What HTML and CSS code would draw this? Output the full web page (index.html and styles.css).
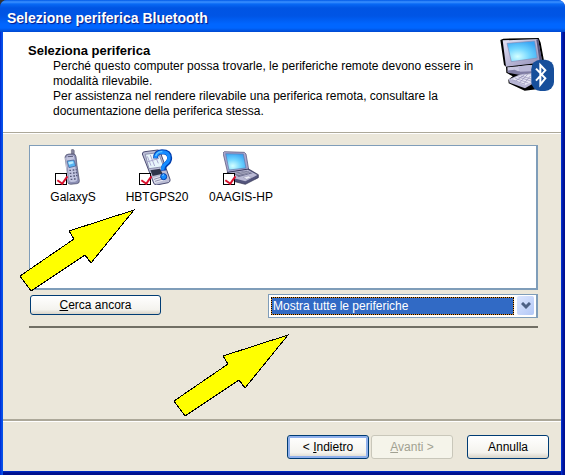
FILE: index.html
```html
<!DOCTYPE html>
<html lang="it">

<head>
    <meta charset="UTF-8">
    <meta name="viewport" content="width=device-width, initial-scale=1.0">
    <title>Selezione periferica Bluetooth</title>
    <link rel="stylesheet" href="styles.css">
</head>

<body>
    <div class="window">
        <div class="title-bar">Selezione periferica Bluetooth</div>

        <div class="window-body">
            <!-- intestazione -->
            <header class="wizard-header">
                <div class="header-text">
                    <h1>Seleziona periferica</h1>
                    <p>Perché questo computer possa trovarle, le periferiche remote devono essere in<br>modalità rilevabile.</p>
                    <p>Per assistenza nel rendere rilevabile una periferica remota, consultare la<br>documentazione della periferica stessa.</p>
                </div>
                <svg class="header-icon" viewBox="28 24 162 162" aria-hidden="true">
                    <defs>
                        <radialGradient id="screen" cx="35%" cy="75%" r="80%">
                            <stop offset="0" stop-color="#d4ffff" />
                            <stop offset=".5" stop-color="#70d5ff" />
                            <stop offset="1" stop-color="#38a4f4" />
                        </radialGradient>
                        <linearGradient id="frame" x1="0" y1="0" x2="1" y2="1">
                            <stop offset="0" stop-color="#e5e4f6" />
                            <stop offset="1" stop-color="#8f8cb6" />
                        </linearGradient>
                    </defs>
                    <path d="M29 30 38 26 144 24 150 38 160 92 150 176 102 182 54 160 53 149 66 139 47 128 46 110 40 105Z" fill="#000" />
                    <path d="M36 31 142 27 154 92 148 98 46 110Z" fill="url(#frame)" />
                    <path d="M137 29 142 27 154 92 147 95Z" fill="#56547b" />
                    <path d="M49 40 132 33 140 84 62 95Z" fill="url(#screen)" stroke="#8a89b4" stroke-width="2" />
                    <path d="M50 112 124 105 130 117 84 129 70 125 51 127Z" fill="#c9c8e1" />
                    <path d="M50 122 72 119 82 124 127 117 124 129 84 134 52 128Z" fill="#7f7ca3" />
                    <path d="M82 109 119 105 123 124 87 125Z" fill="#bbb9d8" />
                    <path d="M54 148 89 133 127 128 134 157 103 175 57 158Z" fill="#b7b5d4" />
                    <path d="m61 148 29-12 31-3 6 22-25 11Z" fill="#e5e5f2" />
                    <path d="m65 149 38 14M74 145l39 14M83 141l40 13M90 138l33 9M75 153l27-19M87 158l24-25M99 162l20-24" stroke="#8f8bb4" stroke-width="2" />
                    <rect x="122" y="89" width="68" height="94" rx="27" fill="#174f9b" />
                    <path d="m136 116 28 29-15 19V105l15 16-28 31" fill="none" stroke="#fff" stroke-width="6" />
                </svg>
            </header>

            <main class="content">
                <div class="device-list">
                    <label class="device">
                        <span class="device-icon">
                            <svg viewBox="45 27 108 108" aria-hidden="true">
                                <path d="M94 29q6-4 9 3v12h-9Z" fill="#83829b" stroke="#33334a" />
                                <path d="M75 51q2-9 12-9h13q7 0 8 8l3 26 7 46q1 8-8 9l-18 2q-8 0-9-7l-2-32Z" fill="#8d90b5" stroke="#424460" stroke-width="2" />
                                <path d="M79 53q1-7 8-7h10q5 0 6 6l3 29 6 36q0 7-7 8l-11 1q-6 0-7-6l-3-34Z" fill="#c2c5e0" />
                                <path d="m83 50 16-1" stroke="#5d5d7b" stroke-width="3" />
                                <path d="m81 63 21-3 5 18-20 5Z" fill="#56b4f3" stroke="#3e5688" stroke-width="2" />
                                <path d="m85 66 13-2 3 6-14 4Z" fill="#b9ecff" />
                                <path d="M88 91h5m5-1h5m4-1h3M89 100h5m5-1h5m3-1h4M90 109h5m5-1h5m3-1h4M92 118h5m5-1h5" stroke="#555879" stroke-width="4" />
                                <path d="m77 53 7 75" stroke="#eef0ff" stroke-width="2" />
                            </svg>
                            <input type="checkbox" checked>
                        </span>
                        <span class="device-name">GalaxyS</span>
                    </label>
                    <label class="device">
                        <span class="device-icon">
                            <svg viewBox="57 27 108 108" aria-hidden="true">
                                <path d="M67 42q0-7 8-7l38-5q6 0 8 7l29 81q2 7-5 10l-35 7q-7 0-9-6Z" fill="#bbbdd5" stroke="#4a4c72" stroke-width="3" />
                                <path d="m76 43 39-5 16 42-44 6Z" fill="#e8f5fb" stroke="#6a6c91" stroke-width="2" />
                                <path d="m82 49 11 28M91 45l13 33M103 42l12 28M81 66l36-11" stroke="#a9a7ce" stroke-width="3" />
                                <path d="m91 91 29-5 8 15-30 7Z" fill="#30354b" />
                                <path d="m99 114 31-8 7 14-33 9Z" fill="#e6e7f2" />
                                <path d="m102 118 26-8M105 124l27-8" stroke="#8b8ba9" stroke-width="3" />
                                <path d="M107 55q-1-19 19-20 23 0 23 19 0 11-11 19-9 6-8 19" fill="none" stroke="#003eaf" stroke-width="15" />
                                <path d="M107 54q0-17 19-18 21 0 21 18 0 10-11 18-9 7-8 18" fill="none" stroke="#168cff" stroke-width="10" />
                                <path d="M107 48q4-13 20-13" fill="none" stroke="#65c8ff" stroke-width="4" />
                                <circle cx="131" cy="110" r="9" fill="#168cff" stroke="#003eaf" stroke-width="3" />
                                <path d="m127 106 5-2" stroke="#9adeff" stroke-width="3" />
                            </svg>
                            <input type="checkbox" checked>
                        </span>
                        <span class="device-name">HBTGPS20</span>
                    </label>
                    <label class="device">
                        <span class="device-icon">
                            <svg viewBox="309 27 108 108" aria-hidden="true">
                                <path d="m309 39 4-4 60 2 5 5 8 46-63 10Z" fill="#a7a6ce" stroke="#48486c" stroke-width="2" />
                                <path d="m317 41 53 1 8 42-51 6Z" fill="url(#screen)" stroke="#6275a8" stroke-width="2" />
                                <path d="m322 97 64-10 29 17v9l-39 20-51-13Z" fill="#53557c" stroke="#292b4a" stroke-width="2" />
                                <path d="m326 98 57-9 29 16-36 19-51-14Z" fill="#babad4" />
                                <path d="m337 99 43-7 18 8-42 11Z" fill="#6e708f" />
                                <path d="m342 102 42-7M349 105l42-8M345 98l19 8M358 96l19 8M370 94l17 7" stroke="#d9d9e8" stroke-width="1" />
                                <path d="m370 112 15-4 10 4-15 6Z" fill="#e9eaf5" stroke="#777998" />
                            </svg>
                            <input type="checkbox" checked>
                        </span>
                        <span class="device-name">0AAGIS-HP</span>
                    </label>
                </div>

                <div class="toolbar">
                    <button type="button" class="btn btn-search"><u>C</u>erca ancora</button>
                    <div class="combo">
                        <select aria-label="Filtro periferiche">
                            <option>Mostra tutte le periferiche</option>
                        </select>
                        <span class="combo-arrow">
                            <svg viewBox="0 0 10 8" aria-hidden="true">
                                <path d="m1 1 4 4 4-4" fill="none" stroke="#4d6185" stroke-width="3" />
                            </svg>
                        </span>
                    </div>
                </div>
                <hr class="divider">
            </main>

            <footer class="wizard-footer">
                <div class="nav-buttons">
                    <button type="button" class="btn btn-default">&lt; <u>I</u>ndietro</button>
                    <button type="button" class="btn" disabled><u>A</u>vanti &gt;</button>
                </div>
                <button type="button" class="btn">Annulla</button>
            </footer>
        </div>

        <!-- frecce gialle sopra la finestra -->
        <svg class="arrow arrow-device" viewBox="0 0 118 84" aria-hidden="true">
            <path d="M115 1 50 22 55 30 1 67 12 82 66 46 72 54Z" />
        </svg>
        <svg class="arrow arrow-filter" viewBox="0 0 118 84" aria-hidden="true">
            <path d="M115 1 50 22 55 30 1 67 12 82 66 46 72 54Z" />
        </svg>
    </div>
</body>

</html>
```

FILE: styles.css
```css
* {
    margin: 0;
    padding: 0;
    box-sizing: border-box;
}

body {
    font-family: "Liberation Sans", Arial, sans-serif;
    font-size: 12px;
    line-height: 15px;
    color: #000;
    background: linear-gradient(90deg, #333 50%, #fff 50%);
}

.window {
    position: relative;
    display: flex;
    flex-direction: column;
    min-height: 100vh;
    padding: 0 4px 4px 3px;
    border-radius: 7px 7px 0 0;
    overflow: hidden;
    background: linear-gradient(90deg, #0030d8 1px, #0a5cf0 2px, #0048e0 3px, transparent 3px, transparent calc(100% - 4px), #0038d8 calc(100% - 4px), #0014a0 calc(100% - 2px), #00108c 100%), linear-gradient(0deg, #00108c 2px, #0030d0 4px, #0054e3 4px);
}

.title-bar {
    height: 32px;
    margin: 0 -4px 0 -3px;
    padding: 3px 7px 0;
    font-size: 14px;
    font-weight: bold;
    line-height: 30px;
    color: #fff;
    text-shadow: 1px 1px 1px #0a1883;
    background: linear-gradient(#0058e6 0, #3c91ff 2px, #0869f5 4px, #0054e3 8px, #0055e5 16px, #0066ff 24px, #0066ff 28px, #0048d0 32px);
}

.window-body {
    display: flex;
    flex-direction: column;
    flex: 1;
    background: #ebe7da;
}

/* intestazione */
.wizard-header {
    display: flex;
    justify-content: space-between;
    padding: 6px 7px 13px 25px;
    background: #fff;
    border-bottom: 1px solid #aca899;
    box-shadow: 0 1px 0 #fff;
}

.header-text {
    padding-top: 5px;
}

.header-text h1 {
    font-size: 13px;
    line-height: 16px;
}

.header-text p {
    padding-left: 25px;
    white-space: nowrap;
}

.header-icon {
    flex: none;
    width: 54px;
    height: 54px;
}

/* contenuto */
.content {
    flex: 1;
    padding: 12px 23px 0 26px;
}

.device-list {
    display: flex;
    height: 145px;
    padding: 3px 1px;
    background: #fff;
    border: 1px solid #7f9db9;
    border-width: 1px 2px 2px 1px;
}

.device {
    display: flex;
    flex-direction: column;
    align-items: center;
    gap: 5px;
    width: 84px;
}

.device-icon {
    position: relative;
    width: 36px;
    height: 36px;
}

.device-icon svg {
    display: block;
    width: 36px;
    height: 36px;
}

.device-icon input {
    position: absolute;
    left: 0;
    bottom: 0;
    width: 12px;
    height: 12px;
    appearance: none;
    background: #fff;
    border: 1px solid #000;
}

.device-icon input:checked::after {
    content: "";
    position: absolute;
    left: 3px;
    top: 0;
    width: 5px;
    height: 8px;
    border: solid #d8102c;
    border-width: 0 2px 2px 0;
    transform: rotate(35deg);
}

.toolbar {
    display: flex;
    justify-content: space-between;
    align-items: flex-start;
    margin-top: 4px;
}

.btn {
    width: 82px;
    height: 24px;
    font: inherit;
    color: #000;
    background: linear-gradient(#fff, #f4f3ee 75%, #d8d4c8);
    border: 1px solid #003c74;
    border-radius: 3px;
}

.btn-search {
    width: 131px;
    height: 20px;
    margin: 1px;
}

.btn-default {
    box-shadow: inset 0 0 0 2px #8fb0ec;
}

.btn:disabled {
    color: #a1a192;
    background: #f5f4ea;
    border-color: #c9c7ba;
}

.combo {
    display: flex;
    gap: 3px;
    width: 270px;
    height: 24px;
    padding: 1px 2px 2px;
    background: #fff;
    border: 1px solid #7f9db9;
    border-width: 1px 2px 1px 1px;
}

.combo select {
    flex: 1;
    height: 18px;
    margin-top: 1px;
    padding-left: 1px;
    font: inherit;
    color: #fff;
    appearance: none;
    background: #316ac5;
    border: 1px solid #e09030;
    outline: 1px dotted #000;
    outline-offset: -1px;
    border-radius: 0;
}

.combo-arrow {
    display: flex;
    align-items: center;
    justify-content: center;
    width: 17px;
    height: 19px;
    background: linear-gradient(135deg, #dce6ff, #b3c8f6);
    border-radius: 2px;
}

.combo-arrow svg {
    width: 10px;
    height: 8px;
}

.divider {
    height: 2px;
    margin-top: 8px;
    background: #716f64;
    border: 0;
}

/* pulsanti in basso */
.wizard-footer {
    display: flex;
    justify-content: flex-end;
    gap: 14px;
    padding: 14px 12px 12px;
    border-top: 2px solid #aca899;
    box-shadow: inset 0 1px 0 #fff;
}

.nav-buttons {
    display: flex;
    gap: 2px;
}

/* frecce */
.arrow {
    position: absolute;
    width: 118px;
    height: 84px;
    fill: #ff0;
    stroke: #000;
    stroke-width: 1px;
    shape-rendering: crispEdges;
    pointer-events: none;
}

.arrow-device {
    left: 19px;
    top: 209px;
}

.arrow-filter {
    left: 173px;
    top: 334px;
}
```
